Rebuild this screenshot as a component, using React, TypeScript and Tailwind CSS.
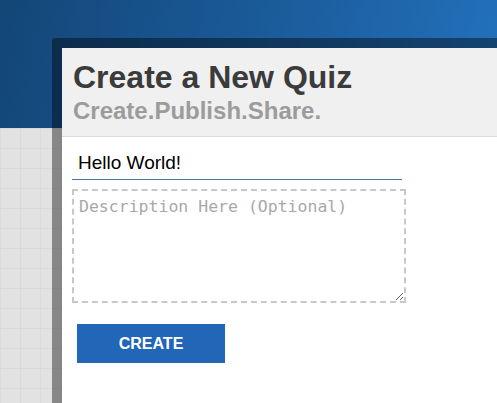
import { useEffect, useRef } from "react";

const App = () => {
  const inputRef = useRef<HTMLInputElement>(null);

  useEffect(() => {
    const el = inputRef.current;
    if (el) {
      el.focus();
      el.setSelectionRange(el.value.length, el.value.length);
    }
  }, []);

  return (
    <div
      className="relative h-[403px] w-[497px] overflow-hidden flex flex-col"
      style={{ fontFamily: '"Liberation Sans", Arial, sans-serif' }}
    >
      {/* page background */}
      <div className="h-[128px] shrink-0 bg-[linear-gradient(100deg,#134677_0%,#1a5a98_50%,#2371bc_100%)]" />
      <div className="flex-1 bg-[#e2e2e2] bg-[linear-gradient(#dadada_1px,transparent_1px),linear-gradient(90deg,#dadada_1px,transparent_1px)] bg-[size:20px_20px]" />

      {/* modal */}
      <div className="absolute left-[52px] top-[38px] w-[560px] h-[480px] rounded-tl-[3px] bg-black/40 p-[10px]">
        <div className="h-full bg-white flex flex-col">
          <div className="bg-[#f0f0f0] border-b border-[#dcdcdc] px-[11px] pt-[13px] pb-[13px]">
            <h1 className="text-[32px] leading-none font-bold text-[#3b3b3b]">
              Create a New Quiz
            </h1>
            <h2 className="mt-[6px] text-[24px] leading-none font-bold text-[#9c9c9c]">
              Create.Publish.Share.
            </h2>
          </div>

          <div className="flex flex-col items-start pl-[10px]">
            <input
              ref={inputRef}
              defaultValue="Hello World!"
              className="mt-[9px] h-[34px] w-[330px] px-[6px] text-[19px] text-black border-b border-[#4a76a8] outline-none bg-transparent"
            />
            <textarea
              placeholder="Description Here (Optional)"
              className="mt-[9px] h-[114px] w-[334px] border-2 border-dashed border-[#c8c8c8] px-[5px] pt-[4px] text-[16.5px] outline-none placeholder:text-[#a8a8a8]"
              style={{ fontFamily: '"DejaVu Sans Mono", monospace' }}
            />
            <button className="mt-[21px] ml-[5px] h-[39px] w-[148px] bg-[#2266b8] text-white text-[16px] font-bold">
              CREATE
            </button>
          </div>
        </div>
      </div>
    </div>
  );
};

export default App;
